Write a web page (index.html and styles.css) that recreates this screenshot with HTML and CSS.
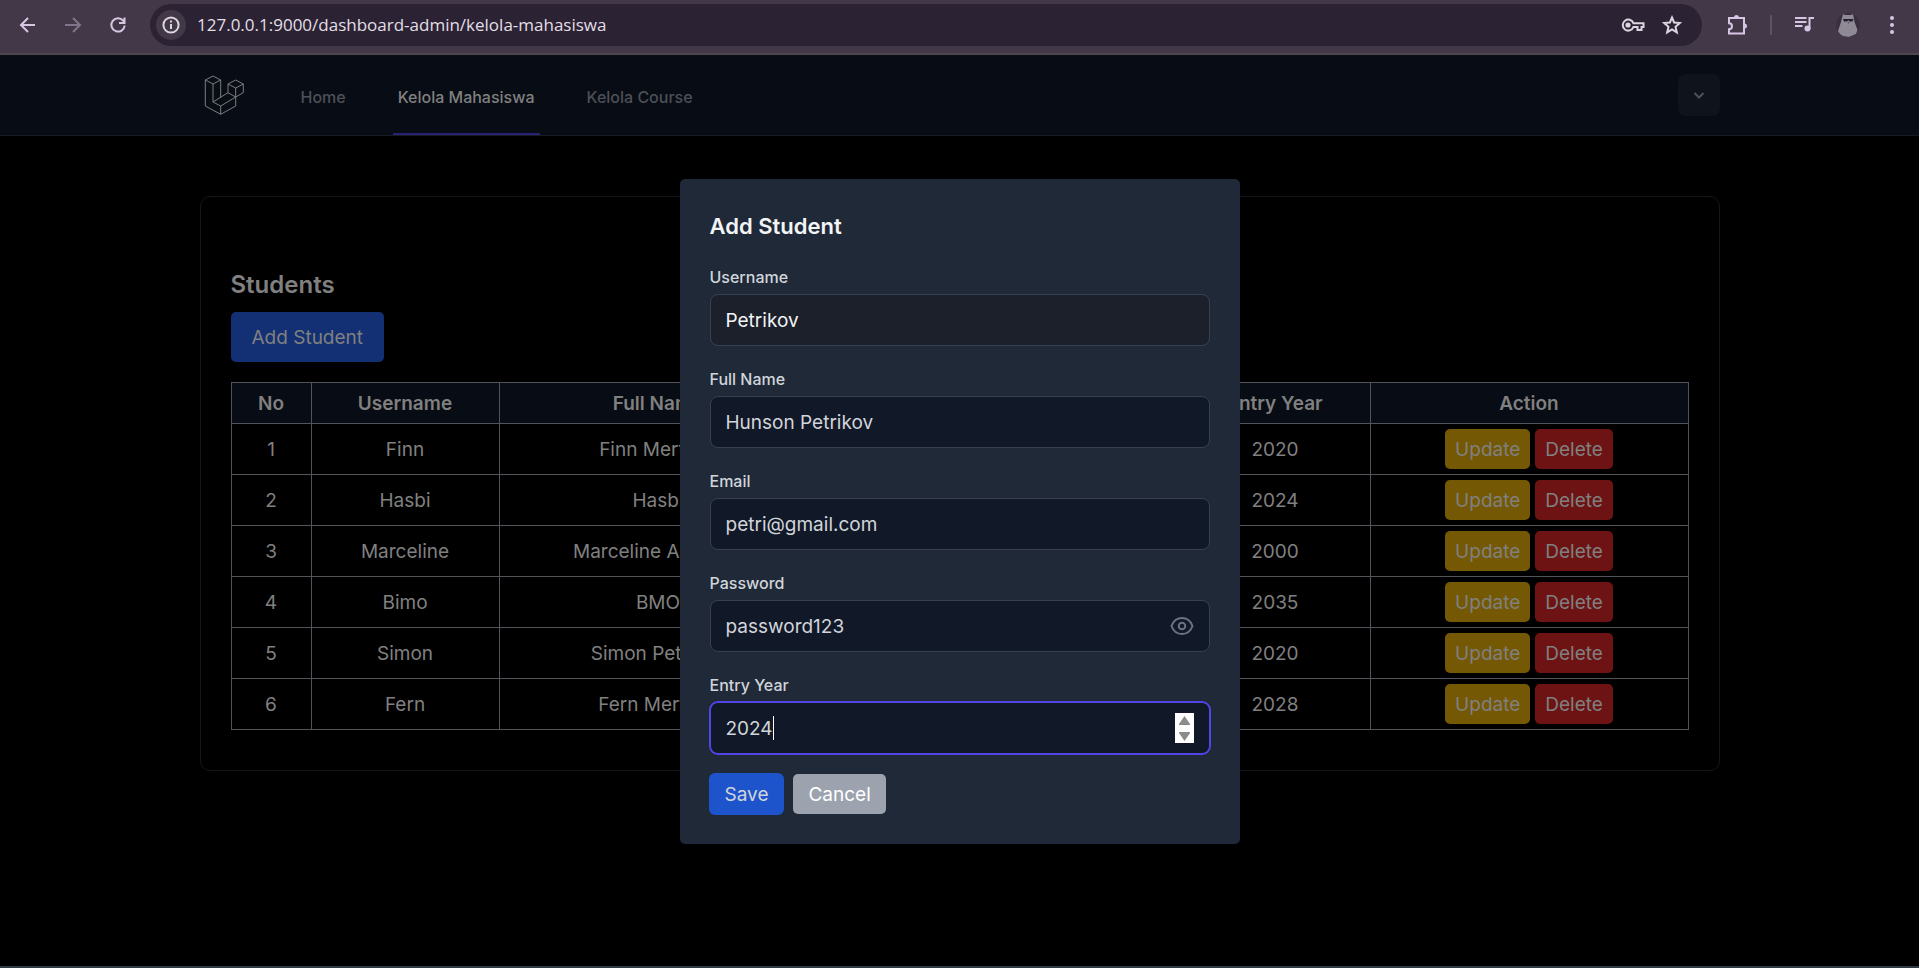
FILE: index.html
```html
<!DOCTYPE html>
<html lang="id">
<head>
<meta charset="utf-8">
<title>Kelola Mahasiswa</title>
<link rel="stylesheet" href="styles.css">
</head>
<body>
<div class="browser">
  <header class="toolbar">
    <div class="tools-left">
      <button type="button" aria-label="Back"><svg width="20" height="20" viewBox="0 0 20 20"><path d="M17 10H3.500M10 3l-7 7 7 7"/></svg></button>
      <button class="tool-off" type="button" aria-label="Forward"><svg width="20" height="20" viewBox="0 0 20 20"><path d="M2 10h14.500M10 3l7 7-7 7"/></svg></button>
      <button type="button" aria-label="Reload"><svg width="20" height="20" viewBox="0 0 20 20"><path d="M16.700 10.500a6.700 6.700 0 1 1-1.600-5l1.400 1.500M16.500 2.500V8H11"/></svg></button>
    </div>
    <div class="address">
      <button class="site-info" type="button" aria-label="Site information"><svg width="20" height="20" viewBox="0 0 20 20"><circle cx="10" cy="10" r="7.600"/><path d="M10 9v5M10 5.600v2"/></svg></button>
      <input class="url" type="text" aria-label="Address" value="127.0.0.1:9000/dashboard-admin/kelola-mahasiswa">
      <button class="pill-tool" type="button" aria-label="Passwords"><svg width="24" height="24" viewBox="0 0 24 24"><path d="M12.400 10.200A5.500 5.500 0 1 0 12.400 14H16.500v3h4v-3h2v-3.800z"/><circle class="solid" cx="7" cy="12" r="2.600"/></svg></button>
      <button class="pill-tool" type="button" aria-label="Bookmark"><svg width="22" height="22" viewBox="0 0 22 22"><path d="M11 3.500l2.100 5 5.700.500-4.300 3.800 1.300 5.600L11 15.400l-4.800 3 1.300-5.600L3.200 9l5.700-.500z"/></svg></button>
    </div>
    <div class="tools-right">
      <button type="button" aria-label="Extensions"><svg width="24" height="24" viewBox="0 0 24 24"><path d="M4 5h15v15.500H4v-4.200a3 3 0 0 0 0-6z"/><path class="solid" d="M9 4.500a2.500 2.500 0 0 1 5 0zM19.500 10.500a2.500 2.500 0 0 1 0 5z"/></svg></button>
      <span class="divider"></span>
      <button type="button" aria-label="Media"><svg width="22" height="22" viewBox="0 0 22 22"><path d="M2 4h11.500M2 8h11.500M2 12h7.500M16.500 15V4H21"/><circle class="solid" cx="14.500" cy="14.500" r="3"/></svg></button>
      <button type="button" aria-label="Profile"><svg class="avatar" width="24" height="24" viewBox="0 0 24 24"><circle cx="12" cy="12" r="12" fill="#37303f"/><path fill="#8f8996" d="M7 1l2 1h6l2-1 1.500 8 3 8-1.500 4-7 3-8-1-3-5 3-9z"/><path fill="#25202f" d="M7 6h10.500l-1 2.500H13.500L12.300 7.200 11 8.500H8zM11.500 9.500h2l-1 1z"/></svg></button>
      <button type="button" aria-label="Menu"><svg width="22" height="22" viewBox="0 0 22 22"><g class="solid"><circle cx="11" cy="4" r="2"/><circle cx="11" cy="11" r="2"/><circle cx="11" cy="18" r="2"/></g></svg></button>
    </div>
  </header>

  <div class="page">
    <nav class="nav">
      <div class="container nav-row">
        <a class="logo" href="#" aria-label="Laravel"><svg width="42" height="42" viewBox="0 0 42 42"><path d="M9 2l7.700 4L9 10 1.300 6zM1.300 6v26l15.400 8.300L31.700 32V14M9 10v18l7.700 4v8.300M16.700 6v17.700M9 28l15-9.300 7.700 4.300L16.700 32M31.700 6l7.600 4-7.600 4L24 10zM24 10v8.700M39.300 10v8.700L31.700 23"/></svg></a>
        <a class="nav-link" href="#">Home</a>
        <a class="nav-link active" href="#">Kelola Mahasiswa</a>
        <a class="nav-link" href="#">Kelola Course</a>
        <button class="user-menu" type="button" aria-label="Account menu"><svg width="20" height="20" viewBox="0 0 20 20"><path d="M5.500 8l4.500 4.500L14.500 8"/></svg></button>
      </div>
    </nav>

    <main class="container">
      <section class="card">
        <h1 class="card-title">Students</h1>
        <button class="btn btn-add" type="button">Add Student</button>
        <table class="students">
          <colgroup><col class="c-no"><col class="c-user"><col class="c-name"><col class="c-mail"><col class="c-year"><col class="c-act"></colgroup>
          <thead><tr><th>No</th><th>Username</th><th>Full Name</th><th>Email</th><th>Entry Year</th><th>Action</th></tr></thead>
          <tbody>
            <tr><td>1</td><td>Finn</td><td>Finn Mertens</td><td></td><td>2020</td><td><div class="actions"><button class="btn btn-update" type="button">Update</button><button class="btn btn-delete" type="button">Delete</button></div></td></tr>
            <tr><td>2</td><td>Hasbi</td><td>Hasbi</td><td></td><td>2024</td><td><div class="actions"><button class="btn btn-update" type="button">Update</button><button class="btn btn-delete" type="button">Delete</button></div></td></tr>
            <tr><td>3</td><td>Marceline</td><td>Marceline Abadeer</td><td></td><td>2000</td><td><div class="actions"><button class="btn btn-update" type="button">Update</button><button class="btn btn-delete" type="button">Delete</button></div></td></tr>
            <tr><td>4</td><td>Bimo</td><td>BMO</td><td></td><td>2035</td><td><div class="actions"><button class="btn btn-update" type="button">Update</button><button class="btn btn-delete" type="button">Delete</button></div></td></tr>
            <tr><td>5</td><td>Simon</td><td>Simon Petrikov</td><td></td><td>2020</td><td><div class="actions"><button class="btn btn-update" type="button">Update</button><button class="btn btn-delete" type="button">Delete</button></div></td></tr>
            <tr><td>6</td><td>Fern</td><td>Fern Mertens</td><td></td><td>2028</td><td><div class="actions"><button class="btn btn-update" type="button">Update</button><button class="btn btn-delete" type="button">Delete</button></div></td></tr>
          </tbody>
        </table>
      </section>
    </main>

    <div class="overlay">
      <form class="modal">
        <h2 class="modal-title">Add Student</h2>
        <div class="field">
          <label for="username">Username</label>
          <div class="control hovered"><input id="username" type="text" value="Petrikov"></div>
        </div>
        <div class="field">
          <label for="fullname">Full Name</label>
          <div class="control"><input id="fullname" type="text" value="Hunson Petrikov"></div>
        </div>
        <div class="field">
          <label for="email">Email</label>
          <div class="control"><input id="email" type="email" value="petri@gmail.com"></div>
        </div>
        <div class="field">
          <label for="password">Password</label>
          <div class="control">
            <input id="password" type="text" value="password123">
            <button class="reveal" type="button" aria-label="Hide password"><svg width="24" height="24" viewBox="0 0 24 24"><path d="M1.500 12C3.500 6.500 7.500 4 12 4s8.500 2.500 10.500 8c-2 5.500-6 8-10.500 8S3.500 17.500 1.500 12z"/><circle cx="12" cy="12" r="3.300"/></svg></button>
          </div>
        </div>
        <div class="field">
          <label for="year">Entry Year</label>
          <div class="control focused">
            <input id="year" class="year" type="number" value="2024">
            <span class="caret"></span>
            <span class="spinner"><button type="button" aria-label="Increase"><svg width="11" height="9" viewBox="0 0 11 9"><path d="M5.500 0L11 8v1H0V8z"/></svg></button><button type="button" aria-label="Decrease"><svg width="11" height="9" viewBox="0 0 11 9"><path d="M5.500 9L11 1V0H0v1z"/></svg></button></span>
          </div>
        </div>
        <div class="modal-actions">
          <button class="btn btn-save" type="submit">Save</button>
          <button class="btn btn-cancel" type="button">Cancel</button>
        </div>
      </form>
    </div>
  </div>
</div>
</body>
</html>
```

FILE: styles.css
```css
* { box-sizing: border-box; }
body {
  margin: 0;
  background: #000;
  color: #808080;
  font: 19px/30px Inter, "Noto Sans", sans-serif;
}
button, input { font: inherit; color: inherit; }
button { border: 0; padding: 0; background: none; cursor: pointer; }
svg { display: block; fill: none; stroke: currentColor; stroke-width: 2; }
.solid { fill: currentColor; stroke: none; }
h1, h2 { margin: 0; font-weight: 600; }
.browser { display: flex; flex-direction: column; min-height: 100vh; border-bottom: 2px solid #2f3944; }

.toolbar {
  display: flex;
  align-items: center;
  height: 55px;
  padding: 0 16px 3px 18px;
  background: #433848;
  border-bottom: 2px solid #51454f;
  color: #d6c6e4;
}
.tools-left, .tools-right { display: flex; align-items: center; }
.tools-left { gap: 25px; }
.tools-right { gap: 21px; }
.tool-off { color: #80748a; }
.address {
  display: flex;
  flex: 1;
  align-items: center;
  height: 42px;
  margin: 0 23px 0 22px;
  padding: 0 19px 0 6px;
  border-radius: 21px;
  background: #2b2333;
  color: #dcd6e0;
}
.site-info { display: grid; place-items: center; width: 30px; height: 30px; margin-right: 11px; border-radius: 50%; background: #433848; }
.url { flex: 1; min-width: 0; padding: 0; border: 0; outline: 0; background: none; font: 17px/24px "Open Sans", "Noto Sans", sans-serif; color: #e3dfe6; }
.pill-tool { margin-left: 16px; }
.divider { width: 2px; height: 20px; border-radius: 1px; background: #5e5268; }
.avatar { stroke: none; border-radius: 50%; }

.page { position: relative; flex: 1; }
.container { width: 100%; max-width: 1520px; margin: 0 auto; }
.nav { background: #080c14; border-bottom: 1px solid #181b22; }
.nav-row { display: flex; align-items: stretch; height: 80px; padding-left: 4px; }
.logo { display: grid; place-items: center; margin-right: 50px; color: #7c7d80; }
.logo svg { stroke-width: 1; }
.nav-link { display: flex; align-items: center; margin-right: 42px; padding: 6px 5px 0; border-bottom: 2px solid transparent; color: #4c5057; font-size: 16px; font-weight: 500; text-decoration: none; }
.nav-link.active { border-color: #272374; color: #808080; }
.user-menu { display: grid; place-items: center; align-self: center; width: 42px; height: 42px; margin-left: auto; border-radius: 8px; background: #0f131b; color: #4e5258; }

.card { margin-top: 60px; padding: 70px 30px 40px; border: 1px solid #14161c; border-radius: 10px; }
.card-title { font-size: 24px; line-height: 35px; }
.btn { height: 40px; padding: 2px 10px 0; border-radius: 5px; }
.btn-add { display: block; height: 50px; margin: 10px 0 20px; padding: 2px 21px 0; background: #123073; }
.students { width: 100%; table-layout: fixed; border-collapse: collapse; text-align: center; }
.students th, .students td { border: 1px solid #52545a; padding: 6px 0 4px; }
.students td:last-child { padding: 5px 0; }
.students th { background: #080c14; font-weight: 600; }
.c-no { width: 80px; } .c-user { width: 188px; } .c-name { width: 318px; } .c-year { width: 190px; } .c-act { width: 318px; }
.actions { display: flex; justify-content: center; gap: 5px; }
.btn-update { background: #755803; }
.btn-delete { background: #6d1314; }

.overlay { position: absolute; inset: 0 0 -2px; display: grid; place-items: center; }
.modal { width: 560px; padding: 30px; border-radius: 5px; background: #1f2937; color: #d1d5db; }
.modal-title { margin-bottom: 20px; font-size: 22px; line-height: 35px; color: #f3f4f6; }
.field { margin-bottom: 20px; }
.field label { display: block; margin-bottom: 4px; font-size: 16px; line-height: 26px; font-weight: 500; }
.control { display: flex; align-items: center; height: 52px; padding: 0 15px; border: 1px solid #374151; border-radius: 8px; background: #111827; }
.control input { flex: 1; min-width: 0; padding: 2px 0 0; border: 0; outline: 0; background: none; }
.hovered { background: #1b202b; color: #f3f4f6; }
.focused { border-color: #4f46e5; box-shadow: 0 0 0 1px #4f46e5; }
.control .year { flex: none; width: auto; field-sizing: content; appearance: textfield; }
.year::-webkit-inner-spin-button { display: none; }
.caret { width: 1px; height: 24px; background: #fff; }
.reveal { color: #6b7280; }
.spinner { display: flex; flex-direction: column; justify-content: space-between; align-items: center; width: 19px; height: 30px; margin-left: auto; padding: 3px 0 2px; background: #fff; color: #8b8b8b; }
.spinner svg { fill: currentColor; stroke: none; }
.modal-actions { display: flex; gap: 10px; }
.btn-save, .btn-cancel { padding: 2px 15px 0; }
.btn-save { background: #1d54cb; box-shadow: 0 0 0 1px #1d54cb; }
.btn-cancel { background: #9ca3af; color: #fff; }
```
